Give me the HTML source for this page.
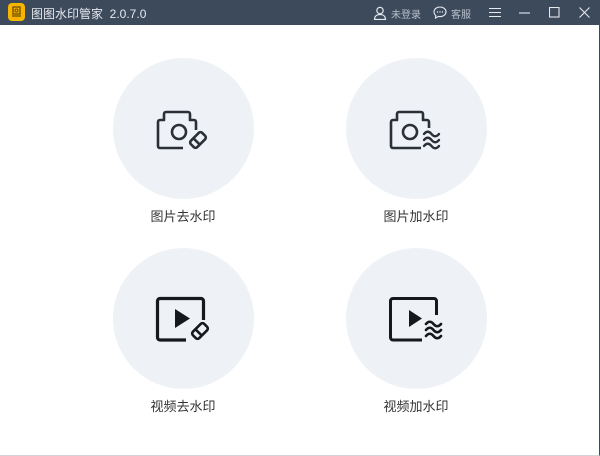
<!DOCTYPE html>
<html><head><meta charset="utf-8"><style>
*{margin:0;padding:0;box-sizing:border-box}
body{width:600px;height:456px;background:#fff;font-family:"Liberation Sans","Noto Sans CJK SC",sans-serif;position:relative;overflow:hidden;border-right:1px solid #3c4a5c;border-bottom:1px solid #d0d4da}
.bar{position:absolute;left:0;top:0;width:600px;height:25px;background:#3d4a5b;color:#e6e9ee;font-size:12px}
.c{position:absolute;width:141px;height:141px;border-radius:50%;background:#eef1f5}
.l{position:absolute;width:140px;text-align:center;font-size:13px;color:#333}
svg{position:absolute}
</style></head><body>
<div class="bar">
<div style="position:absolute;left:8px;top:3px;width:17px;height:18px;border-radius:4px;background:#f7b500"></div>
<svg style="left:11px;top:6px" width="11" height="12" viewBox="0 0 11 12"><path d="M2 1h7v7H2zM1 10h9" stroke="#6b4a00" stroke-width="1.3" fill="none"/><circle cx="5.5" cy="4.5" r="1.5" fill="none" stroke="#6b4a00"/></svg>
<span style="position:absolute;left:31px;top:5px">图图水印管家&nbsp; 2.0.7.0</span>
<svg style="left:373px;top:6px" width="14" height="14" viewBox="0 0 14 14"><circle cx="7" cy="4.5" r="3.2" fill="none" stroke="#e6e9ee" stroke-width="1.2"/><path d="M1.5 13.5c0-3.5 2.5-5 5.5-5s5.5 1.5 5.5 5z" fill="none" stroke="#e6e9ee" stroke-width="1.2"/></svg>
<span style="position:absolute;left:391px;top:6px;font-size:10px;color:#b8c0cb">未登录</span>
<svg style="left:433px;top:6px" width="14" height="13" viewBox="0 0 14 13"><path d="M7 1C3.5 1 1 3.2 1 6c0 1.5.7 2.6 1.8 3.4L2.5 12l3-1.6C6 10.5 6.5 10.6 7 10.6c3.5 0 6-2.2 6-4.8S10.5 1 7 1z" fill="none" stroke="#e6e9ee" stroke-width="1.1"/><circle cx="4.5" cy="6" r=".7" fill="#e6e9ee"/><circle cx="7" cy="6" r=".7" fill="#e6e9ee"/><circle cx="9.5" cy="6" r=".7" fill="#e6e9ee"/></svg>
<span style="position:absolute;left:451px;top:6px;font-size:10px;color:#b8c0cb">客服</span>
<svg style="left:489px;top:7px" width="13" height="11"><path d="M0 1.5h12M0 5.5h12M0 9.5h12" stroke="#e6e9ee" stroke-width="1.1"/></svg>
<svg style="left:519px;top:12px" width="11" height="2"><path d="M0 1h11" stroke="#e6e9ee" stroke-width="1.1"/></svg>
<svg style="left:549px;top:7px" width="11" height="11"><rect x=".5" y=".5" width="9.5" height="9.5" fill="none" stroke="#e6e9ee" stroke-width="1.1"/></svg>
<svg style="left:579px;top:7px" width="11" height="11"><path d="M.5 .5l10 10M10.5 .5l-10 10" stroke="#e6e9ee" stroke-width="1.1"/></svg>
</div>

<div class="c" style="left:113px;top:58px"></div>
<div class="c" style="left:346px;top:58px"></div>
<div class="c" style="left:113px;top:248px"></div>
<div class="c" style="left:346px;top:248px"></div>

<!-- camera eraser -->
<svg style="left:155px;top:108px" width="56" height="45" viewBox="0 0 56 45"><g fill="none" stroke="#2b2f36" stroke-width="2.6" stroke-linejoin="round">
<path d="M28 40H5a2 2 0 0 1-2-2V14a2 2 0 0 1 2-2h4V6a2 2 0 0 1 2-2h22a2 2 0 0 1 2 2v6h4a2 2 0 0 1 2 2v8"/>
<circle cx="24" cy="24" r="7"/>
<g transform="rotate(-45 43 32)"><rect x="35" y="27.5" width="16" height="9" rx="2.5"/><path d="M41 27.5v9"/></g></g></svg>
<!-- camera waves -->
<svg style="left:388px;top:108px" width="58" height="45" viewBox="0 0 58 45"><g fill="none" stroke="#2b2f36" stroke-width="2.6" stroke-linejoin="round">
<path d="M33 40H5a2 2 0 0 1-2-2V14a2 2 0 0 1 2-2h4V6a2 2 0 0 1 2-2h22a2 2 0 0 1 2 2v6h4a2 2 0 0 1 2 2v6"/>
<circle cx="22" cy="24" r="7"/></g>
<g fill="none" stroke="#2b2f36" stroke-width="2.4" stroke-linecap="round"><path d="M36 26c2.5-3 5-3 7.5 0s5 3 7.5 0M36 32c2.5-3 5-3 7.5 0s5 3 7.5 0M36 38c2.5-3 5-3 7.5 0s5 3 7.5 0"/></g></svg>
<!-- video eraser -->
<svg style="left:155px;top:296px" width="58" height="48" viewBox="0 0 58 48"><g fill="none" stroke="#15181d" stroke-width="3.2" stroke-linejoin="round">
<path d="M31 44H5a2.5 2.5 0 0 1-2.5-2.5V5A2.5 2.5 0 0 1 5 2.5h41A2.5 2.5 0 0 1 48.5 5v19"/></g>
<g fill="none" stroke="#15181d" stroke-width="2.6" transform="rotate(-45 45 35)"><rect x="37" y="30.5" width="16" height="9" rx="2.5"/><path d="M43 30.5v9"/></g>
<path d="M20 13v19l15-9.5z" fill="#15181d"/></svg>
<!-- video waves -->
<svg style="left:388px;top:296px" width="60" height="48" viewBox="0 0 60 48"><g fill="none" stroke="#15181d" stroke-width="3" stroke-linejoin="round">
<path d="M34 44H5a2.5 2.5 0 0 1-2.5-2.5V5A2.5 2.5 0 0 1 5 2.5h41A2.5 2.5 0 0 1 48.5 5v14"/></g>
<path d="M21 14v17l13-8.5z" fill="#15181d"/>
<g fill="none" stroke="#15181d" stroke-width="2.6" stroke-linecap="round"><path d="M38 28c2.5-3 5-3 7.5 0s5 3 7.5 0M38 34c2.5-3 5-3 7.5 0s5 3 7.5 0M38 40c2.5-3 5-3 7.5 0s5 3 7.5 0"/></g></svg>

<div class="l" style="left:113px;top:206px">图片去水印</div>
<div class="l" style="left:346px;top:206px">图片加水印</div>
<div class="l" style="left:113px;top:396px">视频去水印</div>
<div class="l" style="left:346px;top:396px">视频加水印</div>
</body></html>
